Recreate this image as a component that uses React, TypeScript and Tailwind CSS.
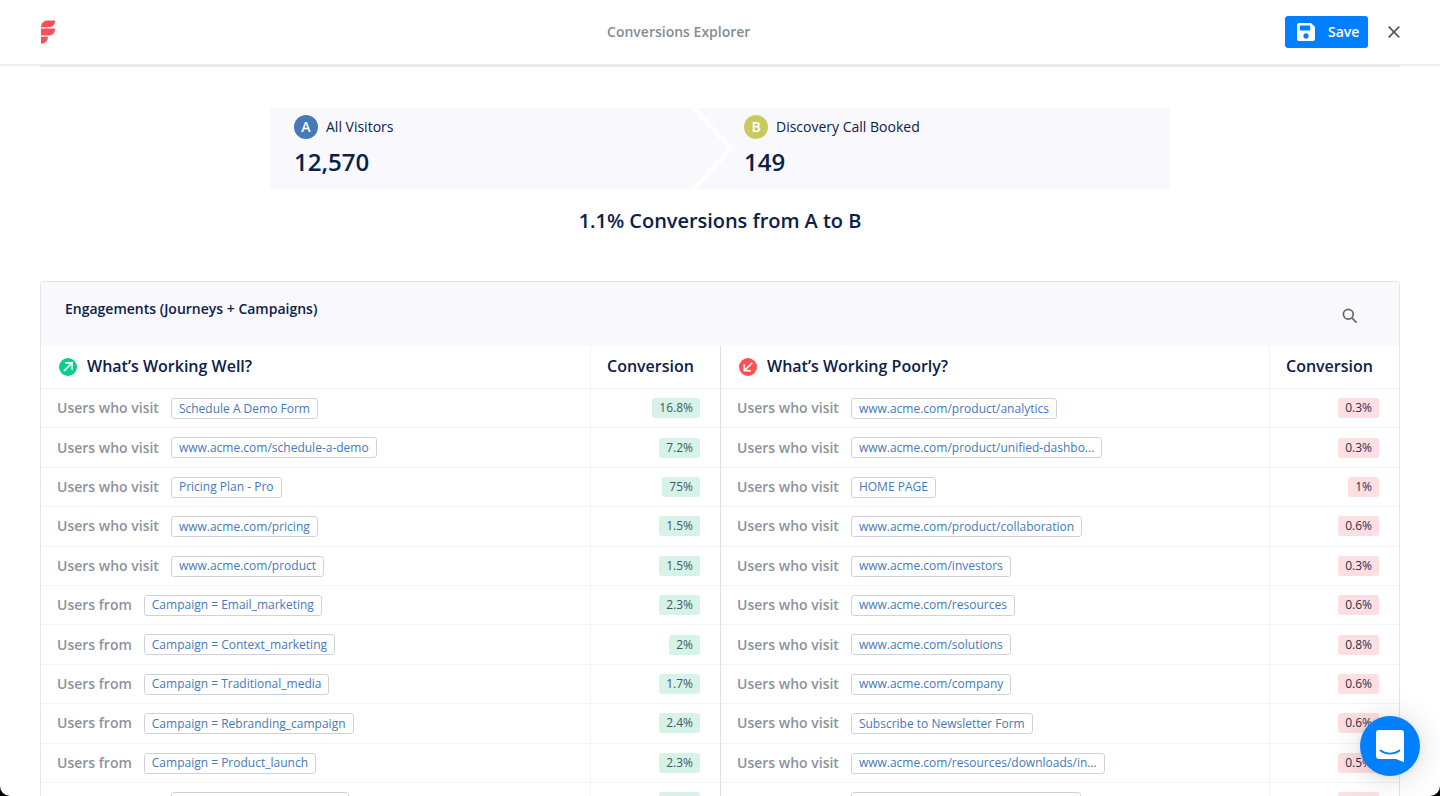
import clsx from "clsx";

type Row = {
  label: string;
  target: string;
  value: string;
};

const workingWell: Row[] = [
  { label: "Users who visit", target: "Schedule A Demo Form", value: "16.8%" },
  { label: "Users who visit", target: "www.acme.com/schedule-a-demo", value: "7.2%" },
  { label: "Users who visit", target: "Pricing Plan - Pro", value: "75%" },
  { label: "Users who visit", target: "www.acme.com/pricing", value: "1.5%" },
  { label: "Users who visit", target: "www.acme.com/product", value: "1.5%" },
  { label: "Users from", target: "Campaign = Email_marketing", value: "2.3%" },
  { label: "Users from", target: "Campaign = Context_marketing", value: "2%" },
  { label: "Users from", target: "Campaign = Traditional_media", value: "1.7%" },
  { label: "Users from", target: "Campaign = Rebranding_campaign", value: "2.4%" },
  { label: "Users from", target: "Campaign = Product_launch", value: "2.3%" },
  { label: "Users who visit", target: "www.acme.com/case-studies", value: "2.1%" },
];

const workingPoorly: Row[] = [
  { label: "Users who visit", target: "www.acme.com/product/analytics", value: "0.3%" },
  { label: "Users who visit", target: "www.acme.com/product/unified-dashbo...", value: "0.3%" },
  { label: "Users who visit", target: "HOME PAGE", value: "1%" },
  { label: "Users who visit", target: "www.acme.com/product/collaboration", value: "0.6%" },
  { label: "Users who visit", target: "www.acme.com/investors", value: "0.3%" },
  { label: "Users who visit", target: "www.acme.com/resources", value: "0.6%" },
  { label: "Users who visit", target: "www.acme.com/solutions", value: "0.8%" },
  { label: "Users who visit", target: "www.acme.com/company", value: "0.6%" },
  { label: "Users who visit", target: "Subscribe to Newsletter Form", value: "0.6%" },
  { label: "Users who visit", target: "www.acme.com/resources/downloads/in...", value: "0.5%" },
  { label: "Users who visit", target: "www.acme.com/resources/webinars-1", value: "0.4%" },
];

function Logo() {
  return (
    <svg width="16" height="24" viewBox="0 0 16 24" fill="#fb4d5a">
      <path d="M1 7.2C1 3.2 3.8.5 8 .5h7c0 3.8-2 6.700-5.800 6.700z" />
      <path d="M1 8.500h14c0 4-2 6.900-6 6.900H1z" />
      <path d="M1 16.800h6.900c0 4-2.600 6.900-6.900 7z" />
    </svg>
  );
}

function Header() {
  return (
    <header className="relative z-10 flex h-16 shrink-0 items-center bg-white pl-[39.5px] pr-[40px] shadow-[0_1px_1px_1px_#ededef]">
      <Logo />
      <h1 className="flex-1 pl-[17px] text-center text-sm font-semibold text-[#868c96]">Conversions Explorer</h1>
      <button className="flex h-8 w-[83px] items-center gap-[13px] rounded-[3px] bg-[#007fff] pl-3 text-sm font-semibold text-white">
        <svg width="18" height="18" viewBox="0 0 18 18">
          <path
            fill="currentColor"
            fillRule="evenodd"
            d="M2 0h12l4 4v12a2 2 0 0 1-2 2H2a2 2 0 0 1-2-2V2a2 2 0 0 1 2-2zm.8 2.600v5h10.400v-5zM9 10.300a2.600 2.600 0 1 0 0 5.200 2.600 2.600 0 0 0 0-5.200z"
          />
        </svg>
        Save
      </button>
      <button className="-mt-px ml-[20px] text-[#555]">
        <svg width="12" height="12" viewBox="0 0 12 12" fill="none" stroke="currentColor" strokeWidth="1.7">
          <path d="M.7.7l10.600 10.600M11.300.7L.7 11.300" />
        </svg>
      </button>
    </header>
  );
}

function Step({ letter, color, name, count }: { letter: string; color: string; name: string; count: string }) {
  return (
    <div className="w-[450px] pl-6 pt-[7px]">
      <div className="flex items-center gap-2">
        <span className={clsx("flex size-6 items-center justify-center rounded-full text-sm font-semibold text-white", color)}>
          {letter}
        </span>
        <span className="text-sm">{name}</span>
      </div>
      <div className="mt-[7px] text-2xl font-semibold">{count}</div>
    </div>
  );
}

function Funnel() {
  return (
    <section className="relative mx-auto mt-[41px] flex h-[81px] w-[900px] bg-[#f9f9fd]">
      <Step letter="A" color="bg-[#4579b8]" name="All Visitors" count="12,570" />
      <Step letter="B" color="bg-[#c8cb5b]" name="Discovery Call Booked" count="149" />
      <svg className="absolute left-[418px] top-0" width="48" height="81" viewBox="0 0 48 81" fill="none">
        <path d="M4 -2L43 40.500L4 83" stroke="#fefeff" strokeWidth="5" />
      </svg>
    </section>
  );
}

function Trend({ good }: { good: boolean }) {
  return (
    <svg width="18" height="18" viewBox="0 0 18 18" fill="none">
      <circle cx="9" cy="9" r="9" fill={good ? "#08d084" : "#ff5056"} />
      <path
        d={good ? "M4.800 13.200L12.600 5.400M6.300 4.900h6.800v6.800" : "M13.200 4.800L5.800 12.200M5.300 6.200v6.500h6.500"}
        stroke="#fff"
        strokeWidth="1.600"
      />
    </svg>
  );
}

function ResultColumn({ title, rows, good }: { title: string; rows: Row[]; good: boolean }) {
  return (
    <div className={clsx("flex flex-col", good ? "w-[680px] border-r border-[#dedfe4]" : "w-[678px]")}>
      <div className="flex h-[42px] text-base font-semibold">
        <div className="flex flex-1 items-center gap-[10px] pl-[18px]">
          <Trend good={good} />
          <span className="-mt-0.5">{title}</span>
        </div>
        <div className="w-[130px] border-l border-[#f3f3f6] pl-4 pt-2">Conversion</div>
      </div>
      {rows.map((row) => (
        <div key={row.target} className="flex h-[39.4px] border-t border-[#f3f3f6]">
          <div className="flex flex-1 items-center pl-4">
            <span className="mr-3 text-sm font-semibold text-[#8d929c]">{row.label}</span>
            <span className="mt-[0.7px] flex h-[21px] items-center rounded-[3px] border border-[#cfd2d8] px-[7px] text-xs text-[#4579b8]">
              {row.target}
            </span>
          </div>
          <div className="flex w-[130px] items-center justify-end border-l border-[#f3f3f6] pr-5">
            <span
              className={clsx(
                "flex h-5 items-center rounded-[3px] px-[7px] text-xs",
                good ? "bg-[#d7f2e7] text-[#3f5965]" : "bg-[#fddfe1] text-[#2d2d50]"
              )}
            >
              {row.value}
            </span>
          </div>
        </div>
      ))}
    </div>
  );
}

function ChatButton() {
  return (
    <button className="absolute left-[1360px] top-[716px] z-20 flex size-[60px] items-center justify-center rounded-full bg-[#007fff] shadow-[0_1px_6px_rgba(0,0,0,0.06),0_2px_32px_rgba(0,0,0,0.16)]">
      <svg width="28" height="32" viewBox="0 0 28 32">
        <path d="M3 0h22a3 3 0 0 1 3 3v29s-4-1.200-7.500-3H3a3 3 0 0 1-3-3V3a3 3 0 0 1 3-3z" fill="#fff" />
        <path d="M4.500 20.500c5.500 4.200 13.500 4.200 19 0" fill="none" stroke="#007fff" strokeWidth="1.700" strokeLinecap="round" />
      </svg>
    </button>
  );
}

export default function App() {
  return (
    <div className="h-[796px] w-[1440px] overflow-hidden bg-black font-['Open_Sans',sans-serif] text-[#0c2149]">
      <div className="relative flex h-full flex-col overflow-hidden rounded-b-[10px] bg-white">
        <Header />
        <main className="px-10">
          <div className="h-[3px] border-b border-[#e6e6ea]" />
          <Funnel />
          <h2 className="mt-[18px] text-center text-xl font-semibold tracking-[-0.04px]">1.1% Conversions from A to B</h2>
          <section className="mt-[46px] rounded-t-[3px] border border-[#e4e4ea]">
            <div className="flex h-16 justify-between bg-[#f9f9fd] pl-6 pr-[41px]">
              <h3 className="pt-[17px] text-sm font-semibold">Engagements (Journeys + Campaigns)</h3>
              <svg className="mt-[26px]" width="16" height="16" viewBox="0 0 16 16" fill="none" stroke="#63666d" strokeWidth="1.7">
                <circle cx="6.300" cy="6.300" r="4.900" />
                <path d="M9.900 9.900l4.700 4.700" />
              </svg>
            </div>
            <div className="flex">
              <ResultColumn title="What’s Working Well?" rows={workingWell} good />
              <ResultColumn title="What’s Working Poorly?" rows={workingPoorly} good={false} />
            </div>
          </section>
        </main>
        <ChatButton />
      </div>
    </div>
  );
}
